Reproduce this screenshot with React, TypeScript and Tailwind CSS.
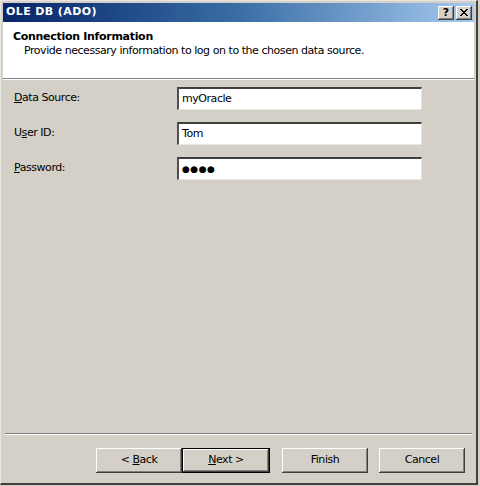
import React from 'react';

const font = { fontFamily: 'Tahoma, "DejaVu Sans", "Liberation Sans", sans-serif' };

type FieldProps = { label: React.ReactNode; value: string; password?: boolean };

const Field = ({ label, value, password }: FieldProps) => (
    <div className="flex items-center h-[23px]">
        <div className="w-[174px] pl-[11px] text-[11px] tracking-[-0.45px] text-black">{label}</div>
        <div className="w-[245px] h-[23px] bg-white border-t-2 border-l-2 border-t-[#404040] border-l-[#505050] border-b border-r border-b-[#e8e6e0] border-r-[#e8e6e0] flex items-center pl-[3px]">
            {password ? (
                <span className="text-[9px] tracking-[0.5px] text-black leading-none">●●●●</span>
            ) : (
                <span className="text-[11px] tracking-[-0.45px] text-black">{value}</span>
            )}
        </div>
    </div>
);

const Button = ({ children, primary }: { children: React.ReactNode; primary?: boolean }) => (
    <button
        className={
            primary
                ? 'w-[88px] h-[25px] bg-[#d4d0c8] border border-black text-[11px] tracking-[-0.45px] text-black shadow-[inset_-1px_-1px_0_#404040,inset_1px_1px_0_#ffffff,inset_-2px_-2px_0_#808080]'
                : 'w-[86px] h-[25px] bg-[#d4d0c8] text-[11px] tracking-[-0.45px] text-black shadow-[inset_-1px_-1px_0_#404040,inset_1px_1px_0_#ffffff,inset_-2px_-2px_0_#808080]'
        }
    >
        {children}
    </button>
);

export default function App() {
    return (
        <div className="w-[480px] h-[486px] bg-[#d4d0c8] flex flex-col" style={font}>
            {/* window frame */}
            <div className="w-[478px] h-[485px] flex flex-col border-t border-l border-[#e8e6e0] border-r-2 border-b-2 border-r-[#404040] border-b-[#404040] pt-[2px] pl-[2px] pr-[2px]">
                {/* title bar */}
                <div className="h-[19px] flex items-center justify-between bg-gradient-to-r from-[#0a246a] via-[#3a6ea5] to-[#a6caf0] pl-[3px] pr-[2px]">
                    <span className="text-[11px] font-bold tracking-[0.4px] text-white">OLE DB (ADO)</span>
                    <div className="flex gap-[2px]">
                        <div className="w-[16px] h-[14px] bg-[#d4d0c8] flex items-center justify-center text-[11px] font-bold text-black leading-none shadow-[inset_-1px_-1px_0_#404040,inset_1px_1px_0_#ffffff,inset_-2px_-2px_0_#808080]">?</div>
                        <div className="w-[16px] h-[14px] bg-[#d4d0c8] flex items-center justify-center shadow-[inset_-1px_-1px_0_#404040,inset_1px_1px_0_#ffffff,inset_-2px_-2px_0_#808080]">
                            <svg width="8" height="7" viewBox="0 0 8 7">
                                <path d="M0 0 L7 7 M1 0 L8 7 M7 0 L0 7 M8 0 L1 7" stroke="#000" strokeWidth="1" />
                            </svg>
                        </div>
                    </div>
                </div>

                {/* header */}
                <div className="h-[57px] bg-white border-b border-[#808080] pl-[10px] pt-[8px]">
                    <div className="text-[11px] font-bold tracking-[-0.3px] text-black leading-[14px]">Connection Information</div>
                    <div className="text-[11px] tracking-[-0.45px] text-black pl-[11px] leading-[14px]">Provide necessary information to log on to the chosen data source.</div>
                </div>
                <div className="h-px bg-white" />

                {/* fields */}
                <div className="flex-1 flex flex-col gap-[12px] pt-[7px]">
                    <Field label={<><u>D</u>ata Source:</>} value="myOracle" />
                    <Field label={<>U<u>s</u>er ID:</>} value="Tom" />
                    <Field label={<><u>P</u>assword:</>} value="" password />
                </div>

                {/* separator */}
                <div className="h-px bg-[#808080] mx-[2px]" />
                <div className="h-px bg-white mx-[2px]" />

                {/* buttons */}
                <div className="h-[48px] flex items-start justify-end pt-[13px] pr-[9px]">
                    <Button>&lt; <u>B</u>ack</Button>
                    <Button primary><u>N</u>ext &gt;</Button>
                    <div className="w-[12px]" />
                    <Button>Finish</Button>
                    <div className="w-[11px]" />
                    <Button>Cancel</Button>
                </div>
            </div>
        </div>
    );
}
